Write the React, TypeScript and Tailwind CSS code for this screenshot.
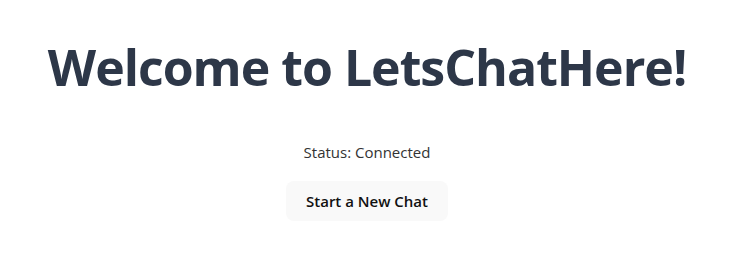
export default function App() {
  return (
    <div className="flex min-h-[277px] flex-col items-center bg-white pt-[29px] pr-[9px] font-['Open_Sans',sans-serif]">
      <h1 className="text-[50px] leading-[76px] font-bold tracking-[-1px] text-[#2d3748]">
        Welcome to LetsChatHere!
      </h1>
      <p className="mt-[35px] text-[15px] leading-[24px] text-[#333]">
        Status: Connected
      </p>
      <button className="mt-[17px] rounded-lg bg-[#f9f9f9] px-[20px] py-[9px] text-[15px] leading-[22px] font-semibold text-[#111]">
        Start a New Chat
      </button>
    </div>
  );
}
